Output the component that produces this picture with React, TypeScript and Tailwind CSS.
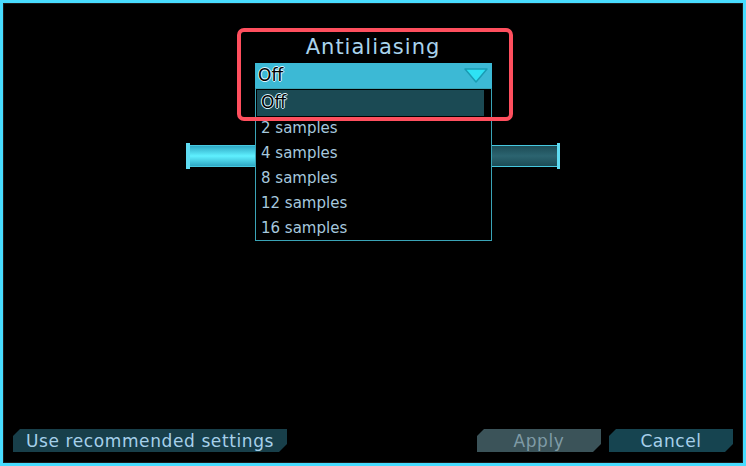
const font = "font-['DejaVu_Sans','Noto_Sans',sans-serif]";

const options = ["Off", "2 samples", "4 samples", "8 samples", "12 samples", "16 samples"];

const chamfer = "[clip-path:polygon(7px_0,100%_0,100%_calc(100%-8px),calc(100%-8px)_100%,0_100%,0_7px)]";

const halo =
  "[text-shadow:1px_0_0_#d8f4ff,-1px_0_0_#d8f4ff,0_1px_0_#d8f4ff,0_-1px_0_#d8f4ff]";

const Slider = () => (
  <div className="flex h-[26px] w-[374px] items-center">
    <div className="h-[26px] w-[4px] bg-[#5fdcf2]" />
    <div className="h-[22px] flex-1 border-y border-[#46c8e0] bg-[linear-gradient(#2fa8c4,#5ff0ff_50%,#2fa8c4)]" />
    <div className="h-[22px] w-[65px] border-y border-[#46c8e0] bg-[linear-gradient(#1c4c56,#2c6470_50%,#1c4c56)]" />
    <div className="h-[26px] w-[3px] bg-[#5fdcf2]" />
  </div>
);

export default function App() {
  return (
    <div className={`relative flex h-[466px] w-[746px] flex-col border-[3px] border-[#48dcff] bg-black ${font}`}>
      <div className="flex flex-1 flex-col items-center border border-[#1c1c1c] pt-[31px]">
        <h1 className="text-[21px] font-medium leading-[24px] tracking-[1px] text-[#a9d3ec]">Antialiasing</h1>

        <div className="relative mt-[4px] ml-[1px] w-[237px]">
          <div className="flex h-[25px] items-center justify-between bg-[#3cb9d5] pl-[3px] pr-[4px]">
            <span className={`text-[17px] text-black ${halo}`}>Off</span>
            <svg width="24" height="15" viewBox="0 0 24 15">
              <path d="M1 1 L23 1 L12 14 Z" fill="#2ee2f4" stroke="#1a9cb4" strokeWidth="1.5" strokeLinejoin="round" />
            </svg>
          </div>
          <div className="absolute left-0 top-[25px] z-10 h-[153px] w-[237px] border border-[#3aa4b6] bg-black pt-[1px]">
            {options.map((o, i) =>
              i === 0 ? (
                <div key={o} className={`mx-[1px] mr-[7px] flex h-[26px] items-center bg-[#1b4a54] pl-[4px] text-[17px] text-black ${halo}`}>
                  {o}
                </div>
              ) : (
                <div key={o} className="flex h-[25px] items-center pl-[5px] text-[15px] text-[#a6c8de]">
                  {o}
                </div>
              )
            )}
          </div>
        </div>

        <div className="mt-[55px] ml-[-1px]">
          <Slider />
        </div>

        <div className="mt-auto mb-[10px] flex w-full items-center px-[9px]">
          <button className={`h-[23px] w-[274px] bg-[#183f4a] text-[17px] tracking-[0.6px] text-[#a6d0ea] ${chamfer}`}>
            Use recommended settings
          </button>
          <div className="flex-1" />
          <button className={`h-[23px] w-[124px] bg-[#3b5359] text-[17px] tracking-[0.6px] text-[#7f9ba6] ${chamfer}`}>
            Apply
          </button>
          <button className={`ml-[8px] h-[23px] w-[124px] bg-[#164450] text-[17px] tracking-[0.6px] text-[#a6d0ea] ${chamfer}`}>
            Cancel
          </button>
        </div>
      </div>

      <div className="pointer-events-none absolute left-[234px] top-[25px] z-20 h-[93px] w-[276px] rounded-[7px] border-[4px] border-[#ff4f5e]" />
    </div>
  );
}
